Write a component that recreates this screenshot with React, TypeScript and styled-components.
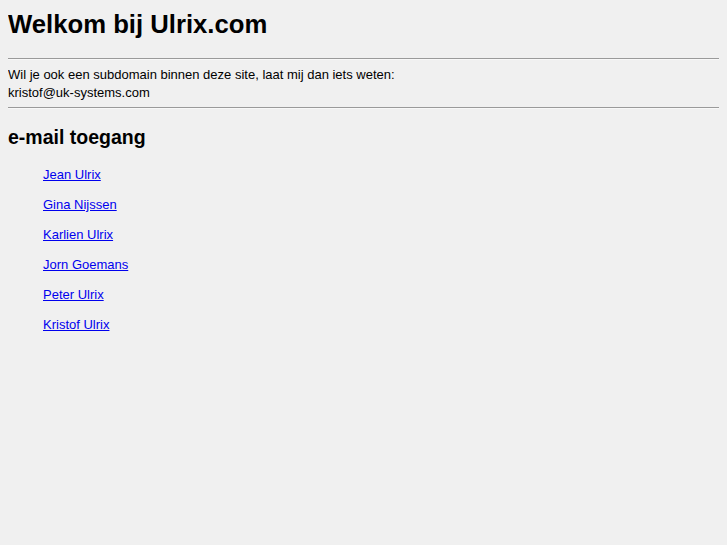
import React from "react";
import styled, { createGlobalStyle } from "styled-components";

const Global = createGlobalStyle`
  html, body { background: #f0f0f0; }
  body {
    margin: 8px;
    font-family: "Liberation Sans", Arial, Helvetica, sans-serif;
    font-size: 13px;
    color: #000;
  }
`;

const Title = styled.h1`
  font-size: 25.7px;
  font-weight: bold;
  margin: 1px 0 19px;
  line-height: 30px;
`;

const Rule = styled.hr`
  border: none;
  border-top: 1px solid #9a9a9a;
  border-bottom: 1px solid #f8f8f8;
  margin: 0;
`;

const Intro = styled.p`
  margin: 6px 0 5px;
  line-height: 18px;
`;

const Subtitle = styled.h2`
  font-size: 19.5px;
  font-weight: bold;
  margin: 17px 0 12px;
  line-height: 22px;
`;

const LinkList = styled.ul`
  list-style: none;
  margin: 0;
  padding: 0 0 0 35px;
`;

const Item = styled.li`
  line-height: 15px;
  padding: 7px 0 8px;
`;

const Link = styled.a`
  color: #0000ee;
  text-decoration: underline;
`;

const names = [
  "Jean Ulrix",
  "Gina Nijssen",
  "Karlien Ulrix",
  "Jorn Goemans",
  "Peter Ulrix",
  "Kristof Ulrix",
];

export default function App() {
  return (
    <>
      <Global />
      <Title>Welkom bij Ulrix.com</Title>
      <Rule />
      <Intro>
        Wil je ook een subdomain binnen deze site, laat mij dan iets weten:
        <br />
        kristof@uk-systems.com
      </Intro>
      <Rule />
      <Subtitle>e-mail toegang</Subtitle>
      <LinkList>
        {names.map((n) => (
          <Item key={n}>
            <Link href="#">{n}</Link>
          </Item>
        ))}
      </LinkList>
    </>
  );
}
